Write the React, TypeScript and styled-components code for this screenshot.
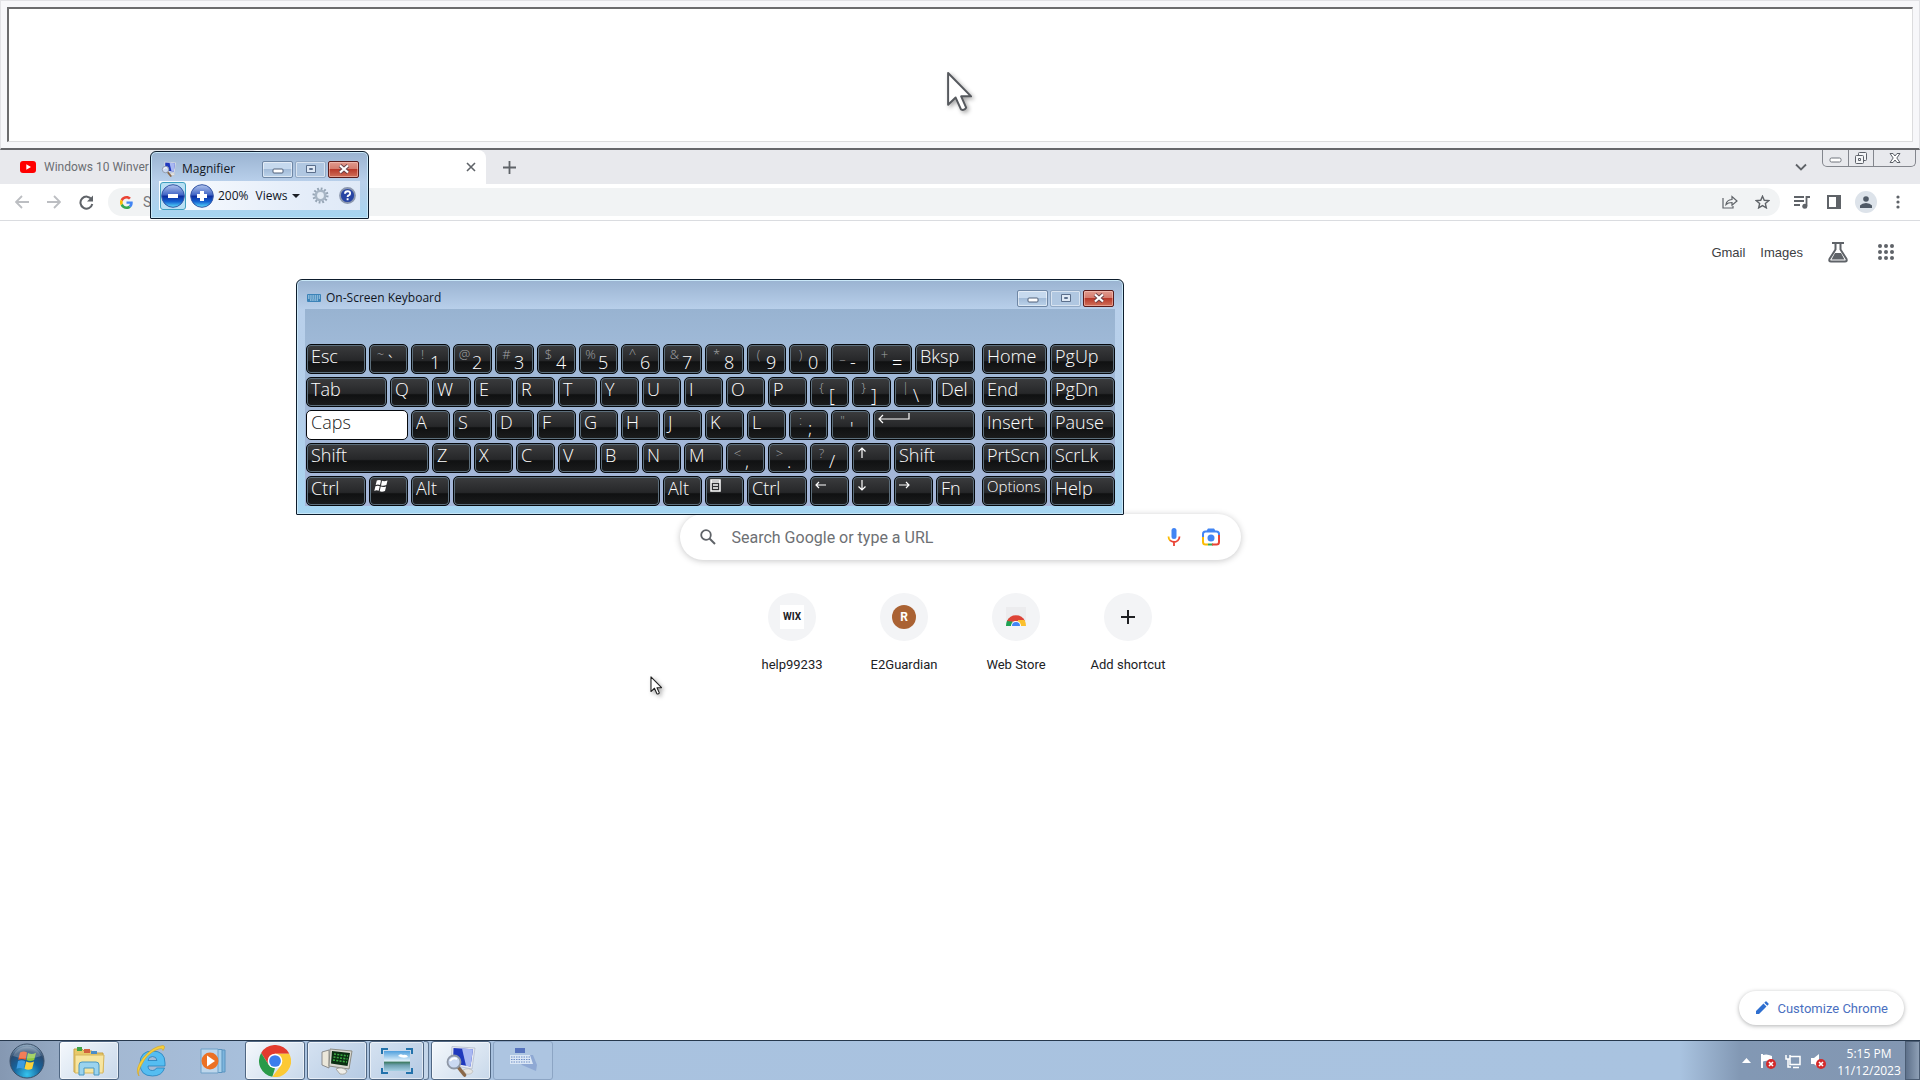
import React from 'react';
import styled, { createGlobalStyle, css } from 'styled-components';

const GlobalStyle = createGlobalStyle`
  *, *::before, *::after { box-sizing: border-box; }
  body { margin: 0; background: #fff; overflow: hidden; }
  button, input { font: inherit; color: inherit; }
  button { padding: 0; border: 0; background: none; }
  svg { display: block; flex: none; }
`;

const segoe = '"Open Sans", "Noto Sans", sans-serif';
const roboto = 'Roboto, "Liberation Sans", sans-serif';

const Desktop = styled.div`
  position: relative;
  display: flex;
  flex-direction: column;
  height: 100vh;
  font-family: ${segoe};
  font-size: 12px;
`;

/* ---------- docked magnifier lens ---------- */
const Dock = styled.section`
  flex: none;
  height: 150px;
  padding: 6px;
  background: #f7f7fa;
  border: 1px solid #e2e2e6;
  border-bottom: 2px solid #66676b;
`;
const Lens = styled.div`
  height: 100%;
  background: #fff;
  border: 1px solid #dcdcde;
  border-top: 2px solid #6c6c6e;
  border-left: 2px solid #6c6c6e;
`;

/* ---------- browser ---------- */
const Browser = styled.main`
  flex: 1;
  min-height: 0;
  display: flex;
  flex-direction: column;
  font-family: ${roboto};
  color: #3c4043;
`;
const TabStrip = styled.div`
  display: flex;
  height: 34px;
  background: #e8e9ed;
  padding: 0 4px 0 12px;
`;
const Tab = styled.div<{ $active?: boolean }>`
  display: flex;
  align-items: center;
  gap: 8px;
  width: 237px;
  padding: 0 8px;
  font-size: 12px;
  color: #6b6e73;
  white-space: nowrap;
  overflow: hidden;
  ${p => p.$active && css`background: #fff; border-radius: 8px 8px 0 0; justify-content: flex-end; padding-right: 10px;`}
`;
const StripButton = styled.button`
  display: grid;
  place-items: center;
  width: 28px;
  height: 34px;
  margin-left: 9px;
`;
const Spacer = styled.div`flex: 1;`;
const Captions = styled.div`
  display: flex;
  height: 17px;
  margin-left: 7px;
  border: 1px solid #83868d;
  border-top: 0;
  border-radius: 0 0 5px 5px;
`;
const Caption = styled.button<{ $wide?: boolean }>`
  display: grid;
  place-items: center;
  width: ${p => (p.$wide ? 42 : 25)}px;
  & + & { border-left: 1px solid #83868d; }
`;
const Toolbar = styled.div`
  display: flex;
  align-items: center;
  height: 37px;
  padding: 0 6px;
  border-bottom: 1px solid #dadce0;
`;
const ToolButton = styled.button`
  display: grid;
  place-items: center;
  width: 32px;
  height: 28px;
`;
const Omnibox = styled.label`
  flex: 1;
  display: flex;
  align-items: center;
  height: 28px;
  margin: 0 6px;
  padding: 0 2px 0 12px;
  border-radius: 14px;
  background: #f1f3f4;
`;
const OmniInput = styled.input`
  flex: 1;
  margin-left: 8px;
  border: 0;
  outline: 0;
  background: none;
  font-size: 14px;
  &::placeholder { color: #77797d; opacity: 1; }
`;
const Avatar = styled.span`
  display: grid;
  place-items: center;
  width: 22px;
  height: 22px;
  border-radius: 50%;
  background: #dde3ea;
`;
const NewTab = styled.div`
  flex: 1;
  display: flex;
  flex-direction: column;
  align-items: center;
`;
const NtpHeader = styled.nav`
  align-self: stretch;
  display: flex;
  justify-content: flex-end;
  align-items: center;
  height: 62px;
  padding-right: 24px;
  font-family: "Liberation Sans", Arial, sans-serif;
  font-size: 13px;
`;
const NtpLink = styled.a`
  margin-right: 15px;
  color: #3c4043;
  text-decoration: none;
`;
const AppButton = styled.button`
  display: grid;
  place-items: center;
  width: 40px;
  height: 40px;
  & + & { margin-left: 8px; margin-right: -10px; }
`;
const SearchBox = styled.label`
  display: flex;
  align-items: center;
  width: 561px;
  height: 46px;
  margin-top: 231px;
  padding: 0 20px 0 19px;
  border-radius: 23px;
  background: #fff;
  box-shadow: 0 1px 6px rgba(32, 33, 36, 0.25);
`;
const SearchInput = styled.input`
  flex: 1;
  min-width: 0;
  margin-left: 15px;
  padding: 0;
  border: 0;
  outline: 0;
  background: none;
  font-size: 16px;
  &::placeholder { color: #6d7074; opacity: 1; }
`;
const IconButton = styled.button`
  display: grid;
  place-items: center;
  margin-left: 20px;
`;
const Shortcuts = styled.div`
  display: flex;
  margin-top: 33px;
`;
const Shortcut = styled.a`
  display: flex;
  flex-direction: column;
  align-items: center;
  gap: 16px;
  width: 112px;
  font-size: 13px;
  line-height: 16px;
  color: #202124;
  text-decoration: none;
`;
const Disc = styled.span`
  display: grid;
  place-items: center;
  width: 48px;
  height: 48px;
  border-radius: 50%;
  background: #f3f4f6;
`;
const Wix = styled.span`
  display: grid;
  place-items: center;
  width: 24px;
  height: 24px;
  background: #fff;
  font: 700 10px/24px ${roboto};
`;
const Letter = styled.span`
  display: grid;
  place-items: center;
  width: 24px;
  height: 24px;
  border-radius: 50%;
  background: #aa6233;
  color: #fff;
  font: 700 12px/24px ${roboto};
`;
const Customize = styled.button`
  display: flex;
  align-items: center;
  align-self: flex-end;
  gap: 8px;
  height: 34px;
  margin: auto 16px 15px 0;
  padding: 0 16px;
  border-radius: 17px;
  background: #fff;
  box-shadow: 0 1px 4px rgba(32, 33, 36, 0.35);
  color: #4a6fc0;
  font-size: 13px;
`;

/* ---------- aero windows ---------- */
const AeroWindow = styled.section<{ $x: number; $y: number; $w: number }>`
  position: absolute;
  left: ${p => p.$x}px;
  top: ${p => p.$y}px;
  width: ${p => p.$w}px;
  padding: 0 8px 8px;
  border: 1px solid #0d1c2c;
  border-radius: 6px 6px 1px 1px;
  background: linear-gradient(#9ab3d1 0, #b9d0eb 30px, #b4cfea 60%, #a6d6f2 100%);
  box-shadow: inset 0 0 0 1px #c9e8f8;
  color: #10161f;
`;
const TitleBar = styled.header<{ $h: number; $top: number }>`
  display: flex;
  align-items: center;
  height: ${p => p.$h}px;
  padding: ${p => p.$top}px 1px 0 2px;
`;
const Title = styled.h1`
  flex: 1;
  margin: 0 0 0 5px;
  font-size: 12px;
  font-weight: 400;
  line-height: 16px;
`;
const AeroButton = styled.button<{ $kind?: 'close' | 'off' }>`
  display: grid;
  place-items: center;
  width: 31px;
  height: 17px;
  margin-left: 2px;
  border: 1px solid #6f87a5;
  border-radius: 2px;
  box-shadow: inset 0 0 0 1px rgba(255, 255, 255, 0.5);
  background: linear-gradient(#c6d9ee 50%, #a3bcd9 50%, #bcd3ea);
  ${p => p.$kind === 'off' && css`border-color: #92a9c5; background: #b0c7e1;`}
  ${p => p.$kind === 'close' && css`
    border-color: #591c1c;
    background: linear-gradient(#e09a8e 0, #d4796b 50%, #b8392a 50%, #d0705a);
    box-shadow: inset 0 0 0 1px rgba(255, 210, 200, 0.5);
  `}
`;
const MagBar = styled.div`
  display: flex;
  align-items: center;
  height: 29px;
  padding-left: 1px;
  background: linear-gradient(90deg, #fafcff, #e7effa 60%, #dfe9f7);
`;
const ZoomButton = styled.button<{ $on?: boolean }>`
  display: grid;
  place-items: center;
  width: 28px;
  height: 28px;
  margin-right: 3px;
  border: 1px solid ${p => (p.$on ? '#3f9fbf' : 'transparent')};
  border-radius: 3px;
  background: ${p => (p.$on ? '#b9e0f4' : 'none')};
`;
const Percent = styled.output`margin-right: 7px;`;
const Views = styled.button`
  display: flex;
  align-items: center;
  gap: 5px;
  margin-right: 12px;
`;
const Caret = styled.i`
  border: 4px solid transparent;
  border-top-color: #1b1f26;
  border-bottom: 0;
`;
const SmallTool = styled.button`
  margin-right: 10px;
`;

/* ---------- on-screen keyboard ---------- */
const KeyDeck = styled.div`
  display: flex;
  gap: 7px;
  padding: 35px 0 0 1px;
  background: linear-gradient(#98b3d1, #9fb9d7 36px, #a5b6d8);
`;
const MainKeys = styled.div`
  display: grid;
  grid-template-columns: repeat(32, 18px);
  grid-auto-rows: 30px;
  gap: 3px;
`;
const SideKeys = styled.div`
  display: grid;
  grid-template-columns: repeat(2, 65px);
  grid-auto-rows: 30px;
  gap: 3px;
`;
const KeyCap = styled.button<{ $span?: number; $lit?: boolean; $small?: boolean }>`
  display: flex;
  align-items: flex-start;
  ${p => p.$span && css`grid-column: span ${p.$span};`}
  padding: 0 4px;
  border: 1px solid #05080c;
  border-radius: 5px;
  box-shadow: inset 0 0 0 1px #5d6f7c;
  background: linear-gradient(#3b3c3e, #262729 55%, #101112 60%, #1b1c1d);
  color: #fff;
  font-size: ${p => (p.$small ? 15 : 18)}px;
  font-weight: 300;
  line-height: ${p => (p.$small ? 18 : 22)}px;
  white-space: nowrap;
  ${p => p.$lit && css`background: #fff; color: #1a1a1a; box-shadow: none;`}
`;
const Upper = styled.span`
  width: 13px;
  color: #a2a4a7;
  font-size: 13px;
  line-height: 18px;
`;
const Lower = styled.span`
  padding: 7px 0 0 1px;
  line-height: 20px;
`;
const GlyphPad = styled.span`padding: 2px 0 0;`;

/* ---------- taskbar ---------- */
const Taskbar = styled.footer`
  flex: none;
  display: flex;
  align-items: stretch;
  height: 40px;
  border-top: 1px solid #26384d;
  background: linear-gradient(90deg, #8598b2 0, #a3b8d2 110px, #a9c2df 300px, #a9c3e0 calc(100% - 240px), #8298b4 calc(100% - 180px), #8397b2);
`;
const Start = styled.button`
  display: grid;
  place-items: center;
  width: 54px;
  margin-right: 5px;
`;
const Task = styled.button<{ $state?: 'open' | 'active' | 'faint'; $w?: number }>`
  display: grid;
  place-items: center;
  width: ${p => p.$w ?? 60}px;
  margin-right: 2px;
  border: 1px solid transparent;
  border-radius: 3px;
  ${p => p.$state && css`
    border-color: #4f6682;
    box-shadow: inset 0 0 0 1px rgba(255, 255, 255, 0.55);
    background: linear-gradient(135deg, #d5e2f1, #b5cae3);
  `}
  ${p => p.$state === 'active' && css`background: linear-gradient(135deg, #f4f8fc, #c8d8ea);`}
  ${p => p.$state === 'faint' && css`border-color: #8ca5c4; background: #adc5e1; box-shadow: none;`}
`;
const StackEdge = styled.span`
  width: 5px;
  margin: 0 2px 0 -2px;
  border: 1px solid #5f7692;
  border-left: 0;
  border-radius: 0 3px 3px 0;
  background: #c3d5e9;
`;
const Tray = styled.div`
  display: flex;
  align-items: center;
  gap: 8px;
  padding-right: 6px;
`;
const Clock = styled.time`
  width: 72px;
  padding-top: 4px;
  color: #fff;
  font-size: 12px;
  line-height: 17px;
  text-align: center;
`;
const ShowDesktop = styled.button`
  width: 15px;
  border: 1px solid #4b5d74;
  background: linear-gradient(90deg, #5d708a, #8ea0b6);
`;

const Pointer = styled.svg<{ $x: number; $y: number }>`
  position: absolute;
  left: ${p => p.$x}px;
  top: ${p => p.$y}px;
  filter: drop-shadow(2px 2px 2px rgba(0, 0, 0, 0.35));
`;

/* ---------- drawings ---------- */
const Cursor = ({ x, y, size, stroke, weight }: { x: number; y: number; size: number; stroke: string; weight: number }) => (
  <Pointer $x={x} $y={y} width={size} height={size * 1.6} viewBox="0 0 13 21">
    <path d="M1 1v16l3.800-3.600 2.700 6q1.600.8 2.600-.9L7.600 12.800h5z" fill="#fff" stroke={stroke} strokeWidth={weight} strokeLinejoin="round" />
  </Pointer>
);
const ChromeLogo = ({ size }: { size: number }) => (
  <svg width={size} height={size} viewBox="0 0 48 48">
    <path d="M24 13h21.300L44.800 12A24 24 0 0 0 3.200 12l11.300 17.500z" fill="#e33b2e" />
    <path d="M3.200 12 14.500 29.500 24 35l-4 12.700A24 24 0 0 1 3.200 12z" fill="#2a9a48" />
    <path d="M33.500 29.500 20 47.700A24 24 0 0 0 45.300 13H24z" fill="#fcc934" />
    <circle cx="24" cy="24" r="11" fill="#fff" />
    <circle cx="24" cy="24" r="8.800" fill="#3b7ded" />
  </svg>
);
const GLogo = () => (
  <svg width="13" height="13" viewBox="0 0 48 48">
    <path fill="#ea4335" d="M24 9.500c3.500 0 6.700 1.200 9.200 3.600l6.900-6.900C35.900 2.400 30.500 0 24 0 14.600 0 6.500 5.400 2.600 13.200l8 6.200C12.400 13.700 17.700 9.500 24 9.500z" />
    <path fill="#4285f4" d="M47 24.600c0-1.600-.2-3.100-.4-4.600H24v9h12.900c-.6 3-2.200 5.500-4.700 7.200l7.700 6C44.400 38 47 31.800 47 24.600z" />
    <path fill="#fbbc05" d="M10.500 28.600A14.500 14.500 0 0 1 10.500 19.400l-8-6.200a24 24 0 0 0 0 21.600z" />
    <path fill="#34a853" d="M24 48c6.500 0 11.900-2.100 15.900-5.800l-7.700-6c-2.200 1.500-4.900 2.300-8.200 2.300-6.300 0-11.600-4.200-13.500-9.900l-8 6.200C6.500 42.600 14.600 48 24 48z" />
  </svg>
);
const MinGlyph = () => <svg width="12" height="9" viewBox="0 0 12 9"><rect x="1" y="4" width="10" height="4" fill="#fff" stroke="#51617a" rx="1" /></svg>;
const MaxGlyph = () => <svg width="12" height="10" viewBox="0 0 12 10"><path d="M1.500 1.500h9v7h-9zM4.500 4.500h3v1h-3z" fill="#dfe9f5" stroke="#5b6f8c" /></svg>;
const CloseGlyph = () => (
  <svg width="12" height="10" viewBox="0 0 12 10">
    <path d="M2 1.500 10 8.500M10 1.500 2 8.500" stroke="#69434a" strokeWidth="4" />
    <path d="M2 1.500 10 8.500M10 1.500 2 8.500" stroke="#fff" strokeWidth="2.200" />
  </svg>
);
const AeroCaptions = () => (
  <>
    <AeroButton aria-label="Minimize"><MinGlyph /></AeroButton>
    <AeroButton aria-label="Maximize" $kind="off"><MaxGlyph /></AeroButton>
    <AeroButton aria-label="Close" $kind="close"><CloseGlyph /></AeroButton>
  </>
);
const MagnifierArt = ({ size }: { size: number }) => (
  <svg width={size} height={size} viewBox="0 0 32 32">
    <path d="M7 1.500 30 3l-3 21L6 20z" fill="#e6e9f1" stroke="#b4bccd" strokeWidth=".8" />
    <path d="M8.500 3 28 4.300l-2.500 17.200L8 18.500z" fill="#1f38bd" />
    <path d="M17 3.600 28 4.300l-2.500 17.200-4.500-.8z" fill="#a9b8f2" />
    <path d="M18 25q6-3 10 1-1 4-7 3z" fill="#e4e4e2" stroke="#b2b2ae" strokeWidth=".6" />
    <path d="M13.500 22.500 19.500 30" stroke="#8b6848" strokeWidth="3.600" strokeLinecap="round" />
    <circle cx="9" cy="17" r="6.500" fill="#cbd9f2" stroke="#8e97a6" strokeWidth="1.800" />
    <path d="M5 16q3-4 7-2" fill="none" stroke="#fff" strokeWidth="2" />
  </svg>
);
const KeyboardArt = () => (
  <svg width="14" height="8" viewBox="0 0 14 8">
    <rect width="14" height="8" rx="1" fill="#3b83b8" />
    <path d="M1 2h12M1 4h12M3 6h8" stroke="#d5ecfa" strokeDasharray="1.500 .7" />
  </svg>
);
const ZoomOrb = ({ plus }: { plus?: boolean }) => (
  <svg width="24" height="24" viewBox="0 0 24 24">
    <defs>
      <linearGradient id="orb" x2="0" y2="1">
        <stop offset="0" stopColor="#b3c6ee" /><stop offset=".46" stopColor="#3e63c4" />
        <stop offset=".5" stopColor="#0c2a9c" /><stop offset=".75" stopColor="#1463d2" /><stop offset="1" stopColor="#5fe0fb" />
      </linearGradient>
    </defs>
    <circle cx="12" cy="12" r="11.300" fill="url(#orb)" stroke="#3656a5" />
    <path d={plus ? 'M10 7h4v3h3v4h-3v3h-4v-3H7v-4h3z' : 'M7 10h10v4H7z'} fill="#fff" />
  </svg>
);
const Gear = () => (
  <svg width="17" height="17" viewBox="0 0 18 18">
    <circle cx="9" cy="9" r="7" fill="none" stroke="#94a3b3" strokeWidth="3" strokeDasharray="1.800 1.870" />
    <circle cx="9" cy="9" r="5" fill="#e4ecf5" stroke="#a7b5c4" strokeWidth="2.800" />
  </svg>
);
const HelpDot = () => (
  <svg width="17" height="17" viewBox="0 0 17 17">
    <circle cx="8.500" cy="8.500" r="7.500" fill="#2745a4" stroke="#8b97ae" strokeWidth="1.800" />
    <path d="M6 6.800q0-2.500 2.600-2.500t2.500 2.100q0 1.300-1.500 2Q8.600 9 8.600 10M8.600 11.300v2" fill="none" stroke="#fff" strokeWidth="1.900" />
  </svg>
);

const ARROWS: Record<string, string> = {
  up: 'M5 12V2M1.500 5.500 5 2l3.500 3.500',
  down: 'M5 1v10M1.500 7.500 5 11l3.500-3.500',
  left: 'M11 6H1M4 3 1 6l3 3',
  right: 'M0 6h10M7 3l3 3-3 3',
};
const Glyph = ({ name }: { name: string }) => {
  if (name === 'win')
    return (
      <svg width="15" height="14" viewBox="0 0 15 14" fill="#fff">
        <path d="M2.800 1.600Q5 .3 7 1.400L6 6Q4 5 1.700 6zM8 1.800q2 1 5.500-.2L12.400 6Q9.500 7.300 7 6.400zM1.400 7.200Q4 6.100 5.800 7.200l-1.100 4.600Q2.600 10.800.3 12zM6.700 7.600q2.500.9 5.400-.2L11 12q-3 1.200-5.300.2z" />
      </svg>
    );
  if (name === 'menu')
    return <svg width="11" height="13" viewBox="0 0 11 13"><path d="M1 1h9v11H1zM1 3h9M3 6h5M3 9h5" fill="none" stroke="#fff" strokeWidth="1.500" /></svg>;
  if (name === 'enter')
    return <svg width="32" height="12" viewBox="0 0 32 12"><path d="M31 0v6H1M5 2 1 6l4 4" fill="none" stroke="#fff" strokeWidth="1.200" /></svg>;
  return <svg width="14" height="13" viewBox="0 0 14 13"><path d={ARROWS[name]} fill="none" stroke="#fff" strokeWidth="1.200" /></svg>;
};

/* A key is a label, a [shifted, plain] pair, or a named glyph, with its width in grid columns. */
type KeyDef = { t?: string; s?: [string, string]; g?: string; w?: number; lit?: boolean };
const letters = (text: string): KeyDef[] => text.split('').map(t => ({ t }));
const pairs = (text: string): KeyDef[] => text.split(' ').map(p => ({ s: [p[0], p[1]] as [string, string] }));

const ROWS: KeyDef[][] = [
  [{ t: 'Esc', w: 3 }, ...pairs('~` !1 @2 #3 $4 %5 ^6 &7 *8 (9 )0 _- +='), { t: 'Bksp', w: 3 }],
  [{ t: 'Tab', w: 4 }, ...letters('QWERTYUIOP'), ...pairs('{[ }] |\\'), { t: 'Del' }],
  [{ t: 'Caps', w: 5, lit: true }, ...letters('ASDFGHJKL'), ...pairs(':; "\''), { g: 'enter', w: 5 }],
  [{ t: 'Shift', w: 6 }, ...letters('ZXCVBNM'), ...pairs('<, >. ?/'), { g: 'up' }, { t: 'Shift', w: 4 }],
  [{ t: 'Ctrl', w: 3 }, { g: 'win' }, { t: 'Alt' }, { w: 10 }, { t: 'Alt' }, { g: 'menu' }, { t: 'Ctrl', w: 3 }, { g: 'left' }, { g: 'down' }, { g: 'right' }, { t: 'Fn' }],
];
const SIDE = ['Home', 'PgUp', 'End', 'PgDn', 'Insert', 'Pause', 'PrtScn', 'ScrLk', 'Options', 'Help'];

const Key = ({ def }: { def: KeyDef }) => (
  <KeyCap $span={def.w ?? 2} $lit={def.lit} aria-label={def.g ?? (def.w === 10 ? 'Space' : undefined)}>
    {def.t}
    {def.s && <><Upper>{def.s[0]}</Upper><Lower>{def.s[1]}</Lower></>}
    {def.g && <GlyphPad><Glyph name={def.g} /></GlyphPad>}
  </KeyCap>
);

const line = { fill: 'none', stroke: '#5f6368', strokeWidth: 1.8 };

const BrowserWindow = () => (
  <Browser>
    <TabStrip>
      <Tab>
        <svg width="16" height="12" viewBox="0 0 16 12"><rect width="16" height="12" rx="3" fill="#f00" /><path d="M6.300 3.300v5.400L11 6z" fill="#fff" /></svg>
        Windows 10 Winver
      </Tab>
      <Tab $active>
        <button aria-label="Close tab"><svg width="10" height="10" viewBox="0 0 10 10"><path d="M1 1l8 8M9 1 1 9" {...line} strokeWidth={1.600} /></svg></button>
      </Tab>
      <StripButton aria-label="New tab"><svg width="13" height="13" viewBox="0 0 13 13"><path d="M6.500 0v13M0 6.500h13" {...line} /></svg></StripButton>
      <Spacer />
      <StripButton aria-label="Search tabs"><svg width="12" height="8" viewBox="0 0 12 8"><path d="M1 1.500l5 5 5-5" {...line} /></svg></StripButton>
      <Captions>
        <Caption aria-label="Minimize window"><svg width="13" height="14" viewBox="0 0 13 14"><rect x="1" y="7" width="11" height="4" rx="1.500" fill="#fff" stroke="#70747c" /></svg></Caption>
        <Caption aria-label="Restore window"><svg width="14" height="14" viewBox="0 0 14 14" fill="#f4f5f7" stroke="#5d6169"><rect x="4.500" y="1.500" width="8" height="8" rx="1" /><rect x="1.500" y="4.500" width="8" height="8" rx="1" /><path d="M4.500 7.500h2v2h-2z" /></svg></Caption>
        <Caption aria-label="Close window" $wide><svg width="12" height="12" viewBox="0 0 12 12"><path d="M1 1.500h3L6 4l2-2.500h3L7.800 6l3.200 4.500H8L6 8l-2 2.500H1L4.200 6z" fill="#fff" stroke="#5d6169" /></svg></Caption>
      </Captions>
    </TabStrip>
    <Toolbar>
      <ToolButton aria-label="Back"><svg width="14" height="14" viewBox="0 0 14 14"><path d="M14 7H1.500M7 1 1 7l6 6" {...line} stroke="#bcbec2" /></svg></ToolButton>
      <ToolButton aria-label="Forward"><svg width="14" height="14" viewBox="0 0 14 14"><path d="M0 7h12.500M7 1l6 6-6 6" {...line} stroke="#bcbec2" /></svg></ToolButton>
      <ToolButton aria-label="Reload"><svg width="15" height="15" viewBox="0 0 15 15"><path d="M12.600 4.500A6 6 0 1 0 13.300 9" {...line} strokeWidth={2} /><path d="M14 .5v6H8z" fill="#5f6368" /></svg></ToolButton>
      <Omnibox>
        <GLogo />
        <OmniInput aria-label="Address" placeholder="Search Google or type a URL" />
        <ToolButton aria-label="Share"><svg width="16" height="14" viewBox="0 0 16 14"><path d="M1 3v10h10V11M4 9.500Q4.500 5 10 4.500V1.500l5 4.500-5 4.300V7.500Q6 7.500 4 9.500z" {...line} strokeWidth={1.200} /></svg></ToolButton>
        <ToolButton aria-label="Bookmark"><svg width="15" height="14" viewBox="0 0 24 23"><path d="M12 2l2.900 6.600 7.200.7-5.400 4.800 1.600 7L12 17.400 5.700 21.100l1.600-7L1.900 9.300l7.200-.7z" {...line} strokeWidth={2.300} /></svg></ToolButton>
      </Omnibox>
      <ToolButton aria-label="Media controls"><svg width="16" height="14" viewBox="0 0 16 14"><path d="M0 2h10M0 6h10M0 10h6M12.500 11V2H16" {...line} /><circle cx="10.800" cy="11.200" r="2.500" fill="#5f6368" /></svg></ToolButton>
      <ToolButton aria-label="Side panel"><svg width="14" height="14" viewBox="0 0 14 14"><path d="M1 1h12v12H1z" {...line} strokeWidth={2} /><path d="M9 1h4v12H9z" fill="#5f6368" /></svg></ToolButton>
      <ToolButton aria-label="Profile"><Avatar><svg width="12" height="12" viewBox="0 0 12 12" fill="#505a66"><circle cx="6" cy="3" r="2.800" /><path d="M0 12V9.500Q2 7 6 7t6 2.500V12z" /></svg></Avatar></ToolButton>
      <ToolButton aria-label="Menu"><svg width="4" height="14" viewBox="0 0 4 14" fill="#5f6368"><circle cx="2" cy="2" r="1.600" /><circle cx="2" cy="7" r="1.600" /><circle cx="2" cy="12" r="1.600" /></svg></ToolButton>
    </Toolbar>
    <NewTab>
      <NtpHeader>
        <NtpLink href="#gmail">Gmail</NtpLink>
        <NtpLink href="#images">Images</NtpLink>
        <AppButton aria-label="Labs"><svg width="22" height="22" viewBox="0 0 22 22"><path d="M5 2h12M8.500 2v6.500L2.500 18q-.8 2.500 1.500 2.500h14q2.300 0 1.500-2.500L13.500 8.500V2" {...line} strokeWidth={2} /><path d="M8 12h6l3.500 6.500h-13z" fill="#5f6368" /></svg></AppButton>
        <AppButton aria-label="Google apps"><svg width="16" height="16" viewBox="0 0 16 16" fill="#5f6368">{[2, 8, 14].map(y => [2, 8, 14].map(x => <circle key={`${x}-${y}`} cx={x} cy={y} r="2" />))}</svg></AppButton>
      </NtpHeader>
      <SearchBox>
        <svg width="18" height="18" viewBox="0 0 18 18"><circle cx="7" cy="7" r="4.800" {...line} /><path d="M10.500 10.500l5.500 5.500" {...line} strokeWidth={2} /></svg>
        <SearchInput aria-label="Search" placeholder="Search Google or type a URL" />
        <IconButton aria-label="Search by voice">
          <svg width="14" height="20" viewBox="0 0 14 20"><rect x="4.500" y="1" width="5" height="11" rx="2.500" fill="#4285f4" /><path d="M1.500 9.500Q1.500 12 3.200 13.600" fill="none" stroke="#fbbc04" strokeWidth="1.800" /><path d="M3 13.400Q7 16.500 10.700 13.600 12.500 12 12.500 9.500M7 15v4" fill="none" stroke="#ea4335" strokeWidth="1.800" /></svg>
        </IconButton>
        <IconButton aria-label="Search by image">
          <svg width="20" height="18" viewBox="0 0 20 18" fill="none" strokeWidth="2"><path d="M2 9V6q0-2.500 2.500-2.500h11Q18 3.500 18 6v2M6.500 3l1-1.500h5l1 1.500" stroke="#4285f4" /><path d="M2 9v5q0 2.500 2.500 2.500H7" stroke="#fbbc04" /><path d="M7 16.500h5" stroke="#34a853" /><path d="M18 7v7q0 2.500-2.500 2.500H11" stroke="#ea4335" /><circle cx="10" cy="10" r="3.500" fill="#4285f4" /></svg>
        </IconButton>
      </SearchBox>
      <Shortcuts>
        <Shortcut href="#help"><Disc><Wix>WIX</Wix></Disc>help99233</Shortcut>
        <Shortcut href="#guardian"><Disc><Letter>R</Letter></Disc>E2Guardian</Shortcut>
        <Shortcut href="#store">
          <Disc><svg width="24" height="24" viewBox="0 0 24 24"><path d="M2 2h20v18H2z" fill="#ececee" /><path d="M2 21A10 10 0 0 1 7 12l3 9z" fill="#1fa254" /><path d="M3 16A10 10 0 0 1 21 16l-9 1z" fill="#de4336" /><path d="M14 15h6.500Q22 18 22 21h-8z" fill="#fbc02d" /><path d="M7 21a5 5 0 0 1 10 0z" fill="#fff" /><path d="M8 21a4 4 0 0 1 8 0z" fill="#4285f4" /></svg></Disc>
          Web Store
        </Shortcut>
        <Shortcut href="#add"><Disc><svg width="16" height="16" viewBox="0 0 16 16"><path d="M8 1v14M1 8h14" stroke="#202124" strokeWidth="2" /></svg></Disc>Add shortcut</Shortcut>
      </Shortcuts>
      <Customize>
        <svg width="14" height="14" viewBox="0 0 14 14" fill="#2f6fd0"><path d="M1 13v-3l7.500-7.500 3 3L4 13zM9.300 1.700 10.500.5q.5-.4 1 0l2 2q.4.5 0 1l-1.200 1.200z" /></svg>
        Customize Chrome
      </Customize>
    </NewTab>
  </Browser>
);

const MagnifierWindow = () => (
  <AeroWindow $x={150} $y={151} $w={219}>
    <TitleBar $h={29} $top={5}>
      <MagnifierArt size={16} />
      <Title>Magnifier</Title>
      <AeroCaptions />
    </TitleBar>
    <MagBar>
      <ZoomButton $on aria-label="Zoom out"><ZoomOrb /></ZoomButton>
      <ZoomButton aria-label="Zoom in"><ZoomOrb plus /></ZoomButton>
      <Percent>200%</Percent>
      <Views>Views<Caret /></Views>
      <SmallTool aria-label="Options"><Gear /></SmallTool>
      <SmallTool aria-label="Help"><HelpDot /></SmallTool>
    </MagBar>
  </AeroWindow>
);

const OnScreenKeyboard = () => (
  <AeroWindow $x={296} $y={279} $w={828}>
    <TitleBar $h={29} $top={7}>
      <KeyboardArt />
      <Title>On-Screen Keyboard</Title>
      <AeroCaptions />
    </TitleBar>
    <KeyDeck>
      <MainKeys>{ROWS.flat().map((def, i) => <Key key={i} def={def} />)}</MainKeys>
      <SideKeys>{SIDE.map(t => <KeyCap key={t} $small={t === 'Options'}>{t}</KeyCap>)}</SideKeys>
    </KeyDeck>
  </AeroWindow>
);

const TaskbarView = () => (
  <Taskbar>
    <Start aria-label="Start">
      <svg width="36" height="36" viewBox="0 0 36 36">
        <defs><radialGradient id="start" cx=".5" cy=".9" r=".9"><stop offset="0" stopColor="#35c4ee" /><stop offset=".45" stopColor="#16629b" /><stop offset=".75" stopColor="#294a70" /><stop offset="1" stopColor="#9fb6cb" /></radialGradient></defs>
        <circle cx="18" cy="18" r="17" fill="url(#start)" stroke="#3a4f68" />
        <path d="M11 9.500q4-2 7 0L16.500 17q-3-2-7.300-.3z" fill="#ee5a2a" />
        <path d="M19 10q4 2 8-.3L25.200 17q-4 2-7.700 0z" fill="#8cc63f" />
        <path d="M9 18q4-1.700 7.200.3L14.500 26q-3-2-7-.3z" fill="#3c9be0" />
        <path d="M17.200 18.500q4 2 7.800 0l-1.800 7.300q-4 2-7.700 0z" fill="#fcd13a" />
        <path d="M4 13a15 15 0 0 1 28 0Q18 18 4 13z" fill="#fff" opacity=".22" />
      </svg>
    </Start>
    <Task $state="active" aria-label="Explorer">
      <svg width="32" height="32" viewBox="0 0 32 32">
        <path d="M1 4h8l2 2h8l2 2h9v19H1z" fill="#e8c969" stroke="#c7a043" />
        <path d="M4 2h5v4H4z" fill="#3fa345" /><path d="M11 4h6v4h-6z" fill="#d1623e" /><path d="M18 6h6v3h-6z" fill="#4b8dc9" />
        <path d="M2 10h29l-1 18H2z" fill="#f7e5a0" stroke="#d6b65c" />
        <path d="M6 30V20q0-3 3-3h14q3 0 3 3v10h-5v-7H11v7z" fill="#9ad3ef" stroke="#4a97c2" />
      </svg>
    </Task>
    <Task aria-label="Internet Explorer">
      <svg width="32" height="34" viewBox="0 0 32 34">
        <path d="M30 19q0-12-12.500-12T5 19.500Q5 32 17.500 32 27 32 29.500 24h-8q-1 2.500-4 2.500-4.500 0-4.500-4.500h17zM13 16.500q.5-4 4.500-4t4.500 4z" fill="#55bdf1" stroke="#2480bb" strokeWidth=".8" />
        <path d="M4 32Q-1 26 8 14 18 2 28 1.500q3 .5 0 5Q28 3 21 6 12 10 7 20 2 29 4 32z" fill="#f5cf3c" stroke="#d3a321" strokeWidth=".6" />
      </svg>
    </Task>
    <Task aria-label="Media Player">
      <svg width="28" height="28" viewBox="0 0 28 28">
        <path d="M10 3h16v22H10z" fill="#7db5dd" stroke="#5b94c0" /><path d="M7 2.500h16v23H7z" fill="#a6cfea" stroke="#5b94c0" /><path d="M2 2h17v24H2z" fill="#bdd6ec" stroke="#6ea1c8" />
        <circle cx="11" cy="14" r="8.500" fill="#ec7124" /><path d="M8 8.500v11l8-5.500z" fill="#fff" />
      </svg>
    </Task>
    <Task $state="active" aria-label="Chrome"><ChromeLogo size={32} /></Task>
    <Task $state="open" aria-label="Task monitor">
      <svg width="32" height="30" viewBox="0 0 32 30">
        <path d="M1 6l7-2v18l-7-3z" fill="#ebe7da" stroke="#777" strokeWidth=".8" />
        <path d="M9 3l22 2-3 18L8 20z" fill="#d9d8d0" stroke="#8c8c84" /><path d="M11 5l18 2-2.500 13L10 17.500z" fill="#0b2e12" />
        <path d="M13 8l14 2M12.500 11l14 2M12 14l14 2" stroke="#3cab43" strokeWidth="1.600" strokeDasharray="2 1.300" /><path d="M15 23q6-3 11 2-1 4-7 3z" fill="#efeee9" stroke="#a7a69f" />
      </svg>
    </Task>
    <Task $state="open" $w={55} aria-label="Pictures">
      <svg width="32" height="28" viewBox="0 0 32 28">
        <defs><linearGradient id="sky" x2="0" y2="1"><stop offset="0" stopColor="#4f9fdd" /><stop offset=".5" stopColor="#dff0fa" /><stop offset=".56" stopColor="#3f7c63" /><stop offset=".7" stopColor="#6c9fae" /><stop offset="1" stopColor="#a5d0e4" /></linearGradient></defs>
        <path d="M3 4h26v20H3z" fill="url(#sky)" />
        <path d="M17 9q2-3 5-1 4-1 5 2-5 2-10-1z" fill="#fff" />
        <path d="M1 7V2h6M25 2h6v5M31 21v5h-6M7 26H1v-5" fill="none" stroke="#2272ab" strokeWidth="2" />
      </svg>
    </Task>
    <StackEdge />
    <Task $state="active" aria-label="Magnifier"><MagnifierArt size={32} /></Task>
    <Task $state="faint" aria-label="On-screen keyboard">
      <svg width="30" height="28" viewBox="0 0 30 28">
        <path d="M7 1h10v5H7z" fill="#5673bd" /><path d="M5 8h20l4 10-1 6-14-6z" fill="#8fa9d4" /><path d="M2 8h20l3 9H2z" fill="#dbe7f5" /><path d="M3 10h19M3 12.500h20M3 15h20" stroke="#6d8dc6" strokeDasharray="1.500 1" />
      </svg>
    </Task>
    <Spacer />
    <Tray>
      <svg width="9" height="5" viewBox="0 0 9 5"><path d="M0 5 4.500 0 9 5z" fill="#fff" /></svg>
      <svg width="18" height="18" viewBox="0 0 18 18"><path d="M3 2v14" stroke="#fff" strokeWidth="2" /><path d="M4 3q4-1.500 9 1v6q-5-2-9-.5z" fill="#fff" /><circle cx="12" cy="12" r="5" fill="#d42a2a" /><path d="M10 10l4 4M14 10l-4 4" stroke="#fff" strokeWidth="1.600" /></svg>
      <svg width="16" height="16" viewBox="0 0 16 16" fill="none" stroke="#fff" strokeWidth="1.500"><path d="M5 3.500h10v8H5zM8 14.500h6M3 8v6h3M1 2v4h4V2M3 6v3" /></svg>
      <svg width="18" height="18" viewBox="0 0 18 18"><path d="M2 6h3l5-4v14l-5-4H2z" fill="#fff" /><circle cx="12" cy="12" r="5" fill="#d42a2a" /><path d="M10 10l4 4M14 10l-4 4" stroke="#fff" strokeWidth="1.600" /></svg>
    </Tray>
    <Clock>5:15 PM<br />11/12/2023</Clock>
    <ShowDesktop aria-label="Show desktop" />
  </Taskbar>
);

export default function App() {
  return (
    <Desktop>
      <GlobalStyle />
      <Dock><Lens /></Dock>
      <BrowserWindow />
      <TaskbarView />
      <MagnifierWindow />
      <OnScreenKeyboard />
      <Cursor x={946} y={71} size={26} stroke="#56595e" weight={1} />
      <Cursor x={650} y={676} size={12} stroke="#222" weight={1.2} />
    </Desktop>
  );
}
